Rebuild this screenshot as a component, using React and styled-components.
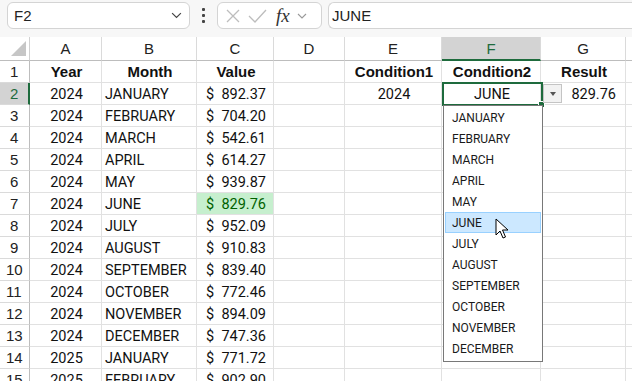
import React from "react";
import styled, { createGlobalStyle } from "styled-components";

const GlobalStyle = createGlobalStyle`
  html, body {
    margin: 0;
    padding: 0;
    background: #ffffff;
    overflow: hidden;
  }
  body {
    font-family: "Liberation Sans", Arial, sans-serif;
  }
`;

const COLS = [30, 72, 95, 77, 71, 97, 99, 85, 60];
const LETTERS = ["A", "B", "C", "D", "E", "F", "G", "H"];
const MONTHS = [
  "JANUARY", "FEBRUARY", "MARCH", "APRIL", "MAY", "JUNE",
  "JULY", "AUGUST", "SEPTEMBER", "OCTOBER", "NOVEMBER", "DECEMBER",
];

const data = [
  ["2024", "JANUARY", "892.37"],
  ["2024", "FEBRUARY", "704.20"],
  ["2024", "MARCH", "542.61"],
  ["2024", "APRIL", "614.27"],
  ["2024", "MAY", "939.87"],
  ["2024", "JUNE", "829.76"],
  ["2024", "JULY", "952.09"],
  ["2024", "AUGUST", "910.83"],
  ["2024", "SEPTEMBER", "839.40"],
  ["2024", "OCTOBER", "772.46"],
  ["2024", "NOVEMBER", "894.09"],
  ["2024", "DECEMBER", "747.36"],
  ["2025", "JANUARY", "771.72"],
  ["2025", "FEBRUARY", "902.90"],
];

const Page = styled.div`
  width: 632px;
  height: 381px;
  overflow: hidden;
  background: #ffffff;
`;

const Toolbar = styled.div`
  height: 37px;
  box-sizing: border-box;
  display: flex;
  align-items: flex-start;
  padding: 2px 0 0 7px;
  background: #f7f7f7;
`;

const NameBox = styled.div`
  width: 183px;
  height: 27px;
  box-sizing: border-box;
  border: 1px solid #d4d4d4;
  border-radius: 6px;
  background: #fff;
  display: flex;
  align-items: center;
  justify-content: space-between;
  padding: 0 7px 0 6px;
  font-size: 15px;
  color: #222;
`;

const Dots = styled.div`
  width: 27px;
  height: 27px;
  display: flex;
  flex-direction: column;
  align-items: center;
  justify-content: center;
  gap: 3px;
  span {
    width: 3px;
    height: 3px;
    border-radius: 1px;
    background: #444;
  }
`;

const FxBox = styled.div`
  width: 105px;
  height: 27px;
  box-sizing: border-box;
  border: 1px solid #d4d4d4;
  border-radius: 6px;
  background: #fff;
  display: flex;
  align-items: center;
  padding: 0 4px 0 7px;
  gap: 7px;
`;

const FxText = styled.span`
  font-family: "Liberation Serif", "Times New Roman", serif;
  font-style: italic;
  font-size: 19px;
  color: #333;
  margin-left: 2px;
`;

const FormulaInput = styled.div`
  flex: 1;
  margin-left: 6px;
  height: 27px;
  box-sizing: border-box;
  border: 1px solid #d4d4d4;
  border-right: none;
  border-radius: 6px 0 0 6px;
  background: #fff;
  display: flex;
  align-items: center;
  padding-left: 3px;
  font-size: 15px;
  color: #222;
`;

const SheetWrap = styled.div`
  position: relative;
`;

const Sheet = styled.div`
  display: grid;
  grid-template-columns: ${COLS.map((c) => c + "px").join(" ")};
  grid-template-rows: 24px repeat(15, 22px);
`;

const Corner = styled.div`
  box-sizing: border-box;
  border-right: 1px solid #d0d0d0;
  border-bottom: 1px solid #bdbdbd;
  background: #fff;
  position: relative;
  svg {
    position: absolute;
    right: 3px;
    bottom: 4px;
  }
`;

const ColHead = styled.div`
  box-sizing: border-box;
  border-right: 1px solid #dadada;
  border-bottom: ${(p) => (p.$active ? "2px solid #1e6b3d" : "1px solid #bdbdbd")};
  background: ${(p) => (p.$active ? "#d3d3d3" : "#fff")};
  color: ${(p) => (p.$active ? "#1e6b3d" : "#222")};
  display: flex;
  align-items: center;
  justify-content: center;
  font-size: 15px;
  padding-top: ${(p) => (p.$active ? "1px" : "0")};
`;

const RowHead = styled.div`
  box-sizing: border-box;
  border-right: ${(p) => (p.$active ? "2px solid #1e6b3d" : "1px solid #bdbdbd")};
  border-bottom: 1px solid #dadada;
  background: ${(p) => (p.$active ? "#d3d3d3" : "#fff")};
  color: ${(p) => (p.$active ? "#1e6b3d" : "#222")};
  display: flex;
  align-items: center;
  padding-left: ${(p) => (p.$wide ? "6px" : "10px")};
  font-size: 15px;
`;

const Cell = styled.div`
  box-sizing: border-box;
  border-right: 1px solid #e1e1e1;
  border-bottom: 1px solid #e1e1e1;
  background: ${(p) => (p.$good ? "#c6efce" : "#fff")};
  color: ${(p) => (p.$good ? "#006100" : "#111")};
  display: flex;
  align-items: center;
  justify-content: ${(p) =>
    p.$align === "center" ? "center" : p.$align === "right" ? "flex-end" : "space-between"};
  padding: ${(p) => (p.$bold ? "0" : "2px")} ${(p) => (p.$align === "right" ? "9px" : "7px")} 0 ${(p) => (p.$align === "left" ? "3px" : "9px")};
  font-family: ${(p) => (p.$bold ? '"Liberation Sans", Arial' : "Roboto, \"Liberation Sans\"")}, sans-serif;
  font-size: ${(p) => (p.$bold ? "15px" : "14.5px")};
  font-weight: ${(p) => (p.$bold ? 700 : 400)};
  white-space: nowrap;
  overflow: visible;
`;

const Money = styled.span`
  display: flex;
  width: 100%;
  justify-content: space-between;
`;

const Selection = styled.div`
  position: absolute;
  left: 442px;
  top: 45px;
  width: 101px;
  height: 24px;
  box-sizing: border-box;
  border: 2px solid #1e6b3d;
  pointer-events: none;
  &::after {
    content: "";
    position: absolute;
    right: -4px;
    bottom: -4px;
    width: 5px;
    height: 5px;
    background: #1e6b3d;
    border: 1px solid #fff;
  }
`;

const DropButton = styled.div`
  position: absolute;
  left: 543px;
  top: 47px;
  width: 19px;
  height: 19px;
  box-sizing: border-box;
  border: 1px solid #c4c4c4;
  background: #f2f2f2;
  display: flex;
  align-items: center;
  justify-content: center;
  &::before {
    content: "";
    border-left: 3.5px solid transparent;
    border-right: 3.5px solid transparent;
    border-top: 4px solid #555;
  }
`;

const DropList = styled.div`
  position: absolute;
  left: 443px;
  top: 68px;
  width: 100px;
  box-sizing: border-box;
  border: 1px solid #787878;
  background: #fff;
  padding: 1px 0 2px;
`;

const DropItem = styled.div`
  height: 21px;
  box-sizing: border-box;
  display: flex;
  align-items: center;
  padding-left: 6px;
  font-family: Roboto, "Liberation Sans", sans-serif;
  font-size: 12px;
  color: #1a1a1a;
  background: ${(p) => (p.$hover ? "#cce8ff" : "transparent")};
  border: 1px solid ${(p) => (p.$hover ? "#99d1ff" : "transparent")};
  margin: 0 1px;
`;

const Pointer = styled.svg`
  position: absolute;
  left: 495px;
  top: 181px;
`;

function Chevron({ size = 10, color = "#555" }) {
  return (
    <svg width={size} height={size * 0.6} viewBox="0 0 10 6">
      <path d="M1 1 L5 5 L9 1" fill="none" stroke={color} strokeWidth="1.1" />
    </svg>
  );
}

function FormulaBar() {
  return (
    <Toolbar>
      <NameBox>
        <span>F2</span>
        <Chevron size={11} color="#444" />
      </NameBox>
      <Dots>
        <span />
        <span />
        <span />
      </Dots>
      <FxBox>
        <svg width="16" height="16" viewBox="0 0 16 16">
          <path d="M2 2 L14 14 M14 2 L2 14" stroke="#bdbdbd" strokeWidth="1.3" fill="none" />
        </svg>
        <svg width="19" height="16" viewBox="0 0 19 16">
          <path d="M1 8 L7 14 L18 2" stroke="#bdbdbd" strokeWidth="1.3" fill="none" />
        </svg>
        <FxText>fx</FxText>
        <Chevron size={10} color="#999" />
      </FxBox>
      <FormulaInput>JUNE</FormulaInput>
    </Toolbar>
  );
}

export default function App() {
  const rows = [];
  rows.push(
    <React.Fragment key="r1">
      <RowHead>1</RowHead>
      <Cell $align="center" $bold>Year</Cell>
      <Cell $align="center" $bold>Month</Cell>
      <Cell $align="center" $bold>Value</Cell>
      <Cell />
      <Cell $align="center" $bold>Condition1</Cell>
      <Cell $align="center" $bold>Condition2</Cell>
      <Cell $align="center" $bold>Result</Cell>
      <Cell />
    </React.Fragment>
  );
  data.forEach((d, i) => {
    const n = i + 2;
    rows.push(
      <React.Fragment key={n}>
        <RowHead $active={n === 2} $wide={n >= 10}>{n}</RowHead>
        <Cell $align="center">{d[0]}</Cell>
        <Cell $align="left">{d[1]}</Cell>
        <Cell $good={n === 7}>
          <Money>
            <span>$</span>
            <span>{d[2]}</span>
          </Money>
        </Cell>
        <Cell />
        <Cell $align="center">{n === 2 ? "2024" : ""}</Cell>
        <Cell $align="center">{n === 2 ? "JUNE" : ""}</Cell>
        <Cell $align="right">{n === 2 ? "829.76" : ""}</Cell>
        <Cell />
      </React.Fragment>
    );
  });

  return (
    <Page>
      <GlobalStyle />
      <FormulaBar />
      <SheetWrap>
        <Sheet>
          <Corner>
            <svg width="15" height="15" viewBox="0 0 15 15">
              <path d="M15 0 L15 15 L0 15 Z" fill="#c6c6c6" />
            </svg>
          </Corner>
          {LETTERS.map((l) => (
            <ColHead key={l} $active={l === "F"}>{l}</ColHead>
          ))}
          {rows}
        </Sheet>
        <Selection />
        <DropButton />
        <DropList>
          {MONTHS.map((m) => (
            <DropItem key={m} $hover={m === "JUNE"}>{m}</DropItem>
          ))}
        </DropList>
        <Pointer width="14" height="22" viewBox="0 0 14 22">
          <path
            d="M1 1 L1 17 L5 13 L8 20 L10.5 19 L7.5 12 L13 12 Z"
            fill="#fff"
            stroke="#000"
            strokeWidth="1"
            strokeLinejoin="round"
          />
        </Pointer>
      </SheetWrap>
    </Page>
  );
}
